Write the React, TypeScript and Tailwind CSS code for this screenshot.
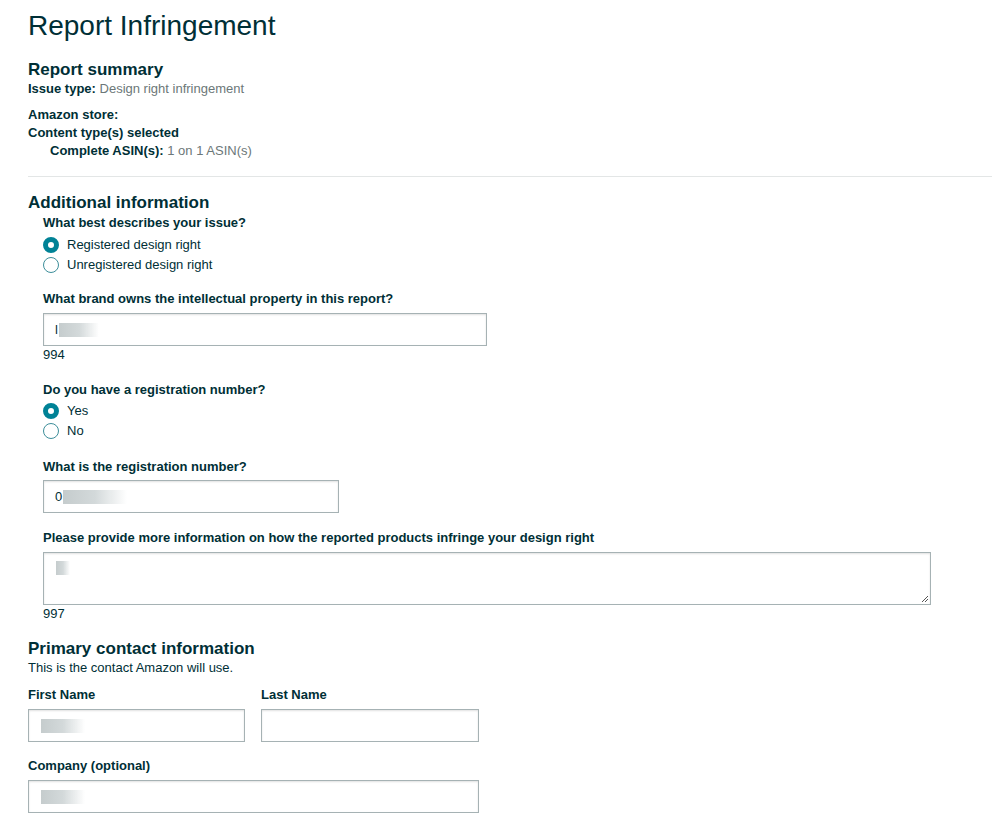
import type { ReactNode } from "react";

// Blurred stand-in for redacted values in the inputs
function Redacted({ lead, width }: { lead: string; width: number }) {
  return (
    <span className="flex items-center">
      <span className="text-[13px] text-[#002f36]">{lead}</span>
      <span
        className="ml-[1px] h-[14px] bg-gradient-to-r from-[#c5cccd] via-[#d3d9da] to-transparent blur-[0.6px]"
        style={{ width }}
      />
    </span>
  );
}

function Radio({ checked, label }: { checked?: boolean; label: string }) {
  return (
    <label className="flex h-5 items-center">
      {checked ? (
        <span className="box-border h-4 w-4 rounded-full border-[5px] border-[#008296] bg-white" />
      ) : (
        <span className="box-border h-4 w-4 rounded-full border border-[#3d8e9a] bg-white" />
      )}
      <span className="ml-[8px] text-[13px] text-[#002f36]">{label}</span>
    </label>
  );
}

function Field({
  label,
  children,
  className = "",
  gap = "mb-[5px]",
}: {
  label: string;
  children: ReactNode;
  className?: string;
  gap?: string;
}) {
  return (
    <div className={className}>
      <div className={`${gap} text-[13px] font-bold leading-[18px] text-[#002f36]`}>{label}</div>
      {children}
    </div>
  );
}

function Input({ width, children }: { width: string; children?: ReactNode }) {
  return (
    <div
      className={`${width} box-border flex h-[33px] items-center border border-[#a6b2b4] bg-white pl-[11px] shadow-[inset_0_1px_2px_rgba(0,0,0,0.12)]`}
    >
      {children}
    </div>
  );
}

export default function App() {
  return (
    <div className="min-h-[825px] bg-white pt-2 font-['Liberation_Sans',Arial,sans-serif] text-[#002f36]">
      <div className="pl-[28px]">
        <h1 className="text-[28px] leading-[36px] font-normal">Report Infringement</h1>

        {/* Report summary */}
        <h2 className="mt-[16px] text-[17px] leading-[20px] font-bold">Report summary</h2>
        <div className="text-[13px] leading-[18px]">
          <span className="font-bold">Issue type: </span>
          <span className="text-[#6c7778]">Design right infringement</span>
        </div>
        <div className="mt-2 text-[13px] leading-[18px] font-bold">Amazon store:</div>
        <div className="text-[13px] leading-[18px] font-bold">Content type(s) selected</div>
        <div className="pl-[22px] text-[13px] leading-[18px]">
          <span className="font-bold">Complete ASIN(s): </span>
          <span className="text-[#6c7778]">1 on 1 ASIN(s)</span>
        </div>
      </div>

      <hr className="mt-4 ml-[28px] border-t border-[#e3e6e6]" />

      <div className="pl-[28px]">
        {/* Additional information */}
        <h2 className="mt-4 text-[17px] leading-[20px] font-bold">Additional information</h2>
        <div className="pl-[15px]">
          <div className="mt-[1px] text-[13px] leading-[18px] font-bold">What best describes your issue?</div>
          <div className="mt-[3px] flex flex-col">
            <Radio checked label="Registered design right" />
            <Radio label="Unregistered design right" />
          </div>

          <Field label="What brand owns the intellectual property in this report?" className="mt-[15px]">
            <Input width="w-[444px]">
              <Redacted lead="l" width={40} />
            </Input>
          </Field>
          <div className="text-[13px] leading-[18px]">994</div>

          <div className="mt-[17px] text-[13px] leading-[18px] font-bold">Do you have a registration number?</div>
          <div className="mt-[2px] flex flex-col">
            <Radio checked label="Yes" />
            <Radio label="No" />
          </div>

          <Field label="What is the registration number?" className="mt-[17px]" gap="mb-[4px]">
            <Input width="w-[296px]">
              <Redacted lead="0" width={64} />
            </Input>
          </Field>

          <Field
            label="Please provide more information on how the reported products infringe your design right"
            className="mt-[16px]"
          >
            <div className="relative box-border h-[53px] w-[888px] border border-[#a6b2b4] bg-white pt-[8px] pl-[11px] shadow-[inset_0_1px_2px_rgba(0,0,0,0.12)]">
              <Redacted lead="" width={14} />
              <svg className="absolute right-[1px] bottom-[1px]" width="9" height="9" viewBox="0 0 9 9">
                <path d="M8 2L2 8M8 5L5 8" stroke="#555" strokeWidth="1" />
              </svg>
            </div>
          </Field>
          <div className="text-[13px] leading-[18px]">997</div>
        </div>

        {/* Primary contact information */}
        <h2 className="mt-[16px] text-[17px] leading-[20px] font-bold">Primary contact information</h2>
        <div className="text-[13px] leading-[18px]">This is the contact Amazon will use.</div>

        <div className="mt-[9px] flex gap-4">
          <Field label="First Name">
            <Input width="w-[217px]">
              <Redacted lead="" width={44} />
            </Input>
          </Field>
          <Field label="Last Name">
            <Input width="w-[218px]" />
          </Field>
        </div>

        <Field label="Company (optional)" className="mt-[15px]">
          <Input width="w-[451px]">
            <Redacted lead="" width={44} />
          </Input>
        </Field>
      </div>
    </div>
  );
}
